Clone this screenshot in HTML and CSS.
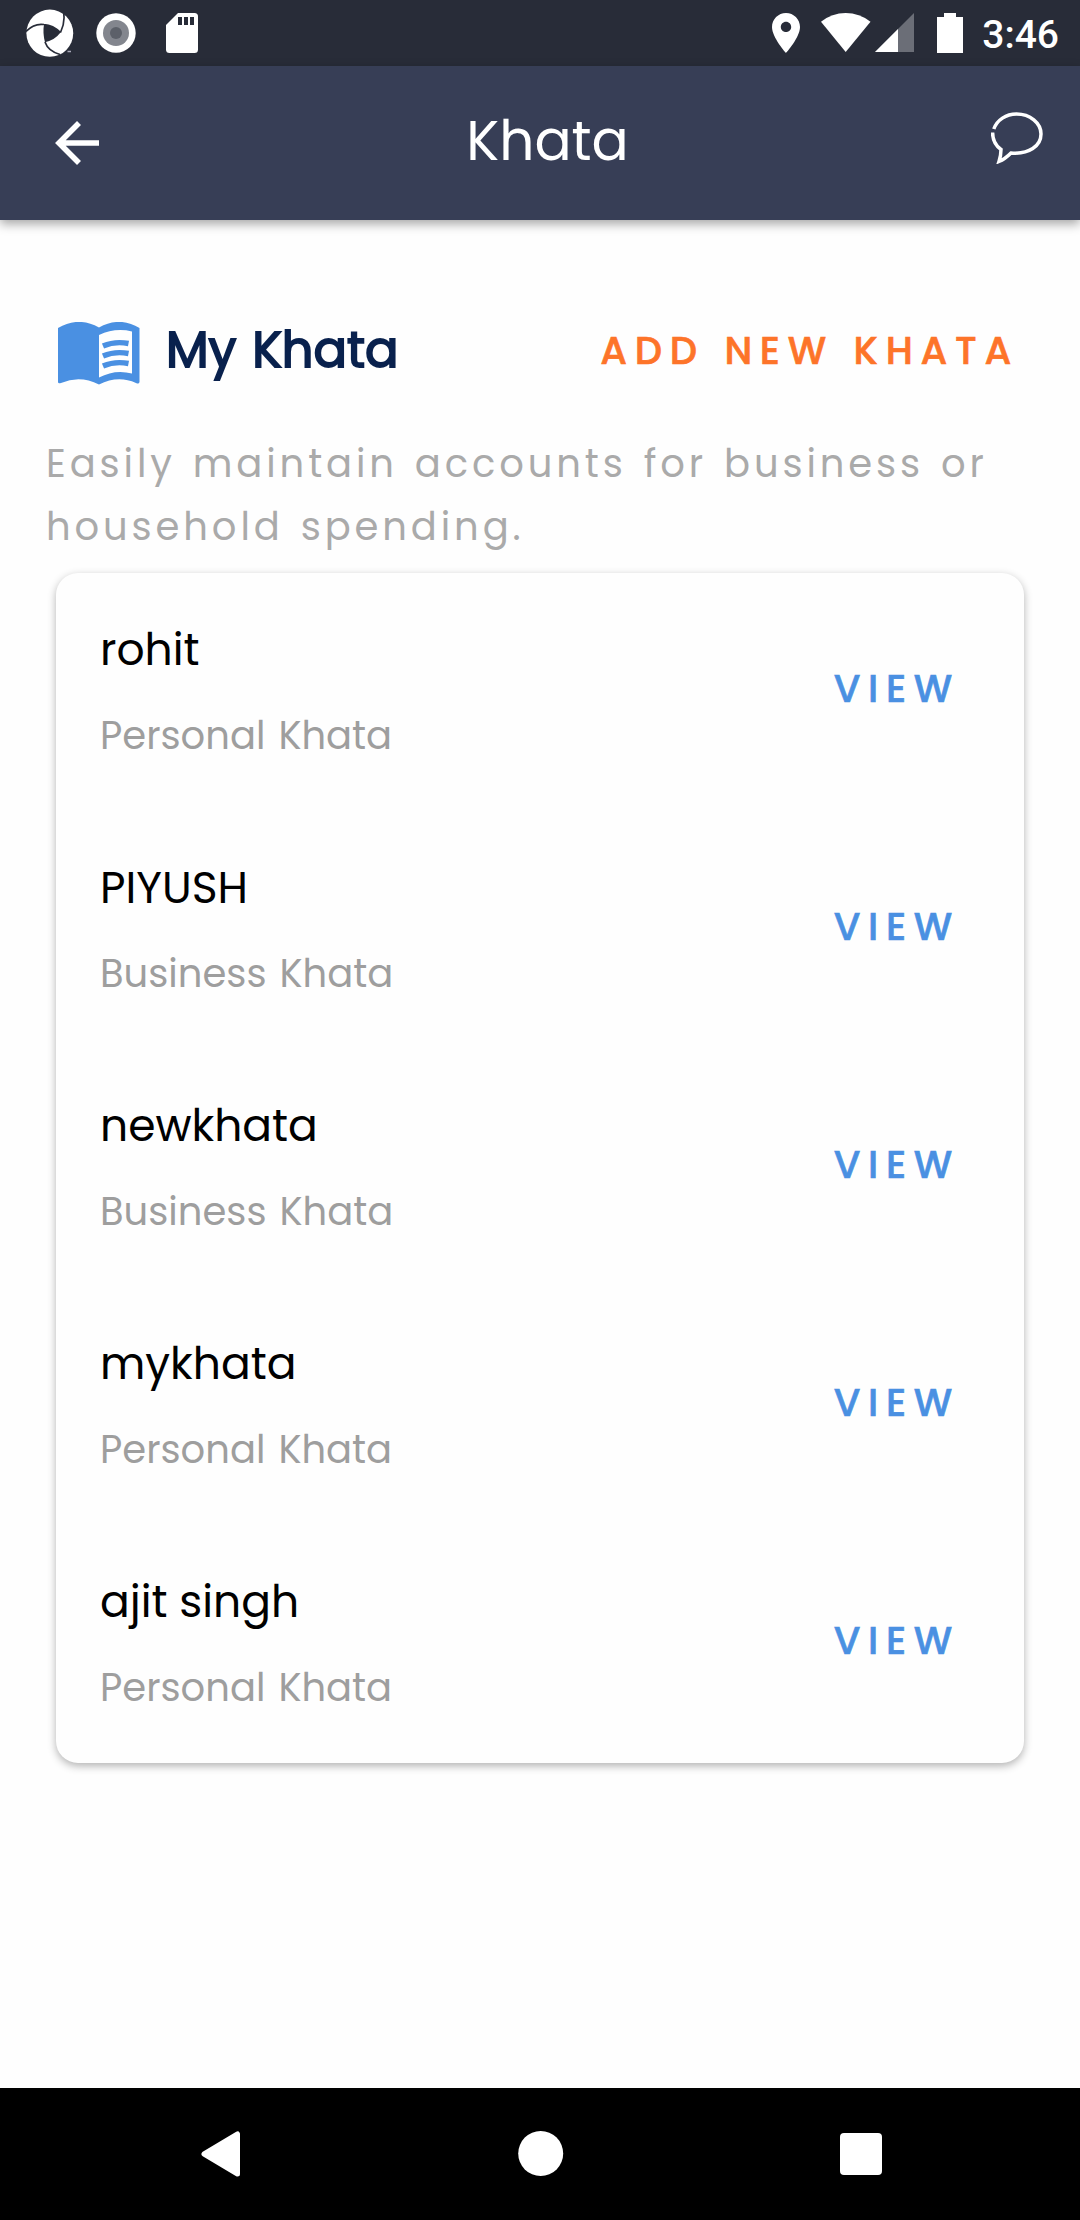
FILE: index.html
```html
<!DOCTYPE html>
<html lang="en">
<head>
<meta charset="utf-8">
<title>Khata</title>
<link rel="stylesheet" href="styles.css">
</head>
<body>
<div class="screen">
  <header class="status-bar">
    <div class="status-left">
      <svg class="icon-aperture" width="48" height="48" viewBox="26 9 48 48">
        <ellipse cx="49.8" cy="33.2" rx="23.4" ry="23.6" fill="#fff"/>
        <path d="M44 24.5Q53 25 60.5 32.5Q55 40 45 42.2Q42.5 33 44 24.5Z" fill="#282c38"/>
        <path d="M26 31.5Q34 23 44 24.5Q53 25 60.5 32.5M63 10Q66 21 60.5 32.5M45 42Q48 51 60 54.5" fill="none" stroke="#282c38" stroke-width="1.7"/>
        <path d="M67.5 51.5h3.5" stroke="#aab" stroke-width="1.5"/>
      </svg>
      <svg class="icon-record" width="40" height="40" viewBox="0 0 40 40">
        <circle cx="20" cy="20" r="19.7" fill="#fff"/>
        <circle cx="20" cy="20" r="13" fill="#83868e"/>
        <circle cx="20" cy="20" r="6" fill="#5c6069"/>
      </svg>
      <svg class="icon-sd" width="32" height="40" viewBox="0 0 32 40">
        <path d="M12 0H28.5Q32 0 32 3.5V36.5Q32 40 28.5 40H3.5Q0 40 0 36.5V12Z" fill="#fff"/>
        <path d="M12 4h4v8h-4zM18 4h4v8h-4zM24 4h4v8h-4z" fill="#282c38"/>
      </svg>
    </div>
    <div class="status-right">
      <svg class="icon-pin" width="28" height="40" viewBox="5 2 14 20" preserveAspectRatio="none">
        <path fill="#fff" d="M12 2C8.13 2 5 5.13 5 9c0 5.25 7 13 7 13s7-7.75 7-13c0-3.87-3.13-7-7-7zm0 9.5c-1.5 0-2.6-1.1-2.6-2.5s1.1-2.6 2.6-2.6 2.6 1.2 2.6 2.6-1.1 2.5-2.6 2.5z"/>
      </svg>
      <svg class="icon-wifi" width="50" height="40" viewBox="0 0 50 40">
        <path fill="#fff" d="M0 8.7Q11 0 24.7 0T49.5 8.7L24.7 39Z"/>
      </svg>
      <svg class="icon-signal" width="40" height="40" viewBox="0 0 40 40">
        <path fill="#6b6e77" d="M39 0V39H0Z"/>
        <path fill="#fff" d="M23 16V39H0Z"/>
      </svg>
      <svg class="icon-battery" width="26" height="40" viewBox="0 0 26 40">
        <path fill="#fff" d="M7 0H19V4H26V40H0V4H7Z"/>
      </svg>
      <span class="clock">3:46</span>
    </div>
  </header>

  <div class="app-bar">
    <svg class="icon-back" width="44" height="44" viewBox="0 0 44 44">
      <path d="M44 22H5M24 2L4 22L24 42" fill="none" stroke="#fff" stroke-width="5.6"/>
    </svg>
    <h1 class="title">Khata</h1>
    <svg class="icon-chat" width="52" height="52" viewBox="0 0 52 52">
      <path d="M2.8 17C6 8 15 2 25.5 2C39 2 50 11 50 22C50 34 38 42.5 20 41C17 44 13 47.5 8 49.5C9.5 45 10 41 10 37.5C5 34 1.6 28 1.6 20.5" fill="none" stroke="#fff" stroke-width="3.5"/>
    </svg>
  </div>

  <main class="content">
    <section class="heading">
      <svg class="icon-book" width="82" height="63" viewBox="0 0 82 63">
        <path fill="#4a90e2" d="M0 6Q20-6 41 5.5Q62-6 81.500 6V60Q81 62.5 78 61Q60 53 41 62.5Q22 53 3 61Q0 62 0 60Z"/>
        <path fill="#fefefe" d="M41 13Q57 5.5 74 9.5V51.5Q57 47 41 55.5Z"/>
        <path fill="none" stroke="#4a90e2" stroke-width="5.4" d="M45 24Q57 18.8 70.5 21.5M45 34Q57 28.8 70.5 31.5M45 44Q57 38.8 70.5 41.5"/>
      </svg>
      <h2 class="heading-text">My Khata</h2>
      <a class="add-link">ADD NEW KHATA</a>
    </section>
    <p class="description">Easily maintain accounts for business or household spending.</p>

    <section class="card">
      <div class="row">
        <div class="info"><div class="name">rohit</div><div class="kind">Personal Khata</div></div>
        <a class="view">VIEW</a>
      </div>
      <div class="row">
        <div class="info"><div class="name">PIYUSH</div><div class="kind">Business Khata</div></div>
        <a class="view">VIEW</a>
      </div>
      <div class="row">
        <div class="info"><div class="name">newkhata</div><div class="kind">Business Khata</div></div>
        <a class="view">VIEW</a>
      </div>
      <div class="row">
        <div class="info"><div class="name">mykhata</div><div class="kind">Personal Khata</div></div>
        <a class="view">VIEW</a>
      </div>
      <div class="row">
        <div class="info"><div class="name">ajit singh</div><div class="kind">Personal Khata</div></div>
        <a class="view">VIEW</a>
      </div>
    </section>
  </main>

  <nav class="nav-bar">
    <svg width="40" height="46" viewBox="0 0 40 46"><path d="M3 23L36.5 3V43Z" fill="#fff" stroke="#fff" stroke-width="5" stroke-linejoin="round"/></svg>
    <svg width="46" height="46" viewBox="0 0 46 46"><circle cx="22.7" cy="22.5" r="22.5" fill="#fff"/></svg>
    <svg width="42" height="42" viewBox="0 0 42 42"><rect width="42" height="42" rx="4" fill="#fff"/></svg>
  </nav>
</div>
</body>
</html>
```
FILE: styles.css
```css
* { box-sizing: border-box; }
body {
  margin: 0;
  background: #fefefe;
  font-family: Poppins, Inter, "Liberation Sans", sans-serif;
}
svg { display: block; flex: none; }
h1, h2, p { margin: 0; font-weight: 400; }
.screen { width: 1080px; height: 2220px; display: flex; flex-direction: column; }
.status-bar {
  height: 66px; flex: none;
  background: #282c38;
  display: flex; justify-content: space-between;
  padding: 0 21px 0 26px;
}
.status-left, .status-right { display: flex; align-items: center; }
.icon-record { margin-left: 22px; }
.icon-sd { margin-left: 30px; }
.icon-wifi { margin-left: 21px; }
.icon-signal { margin-left: 4px; }
.icon-battery { margin-left: 22px; }
.clock {
  margin-left: 19px;
  padding-top: 4px;
  color: #fff;
  font: 500 39px/62px Roboto, sans-serif;
}
.app-bar {
  height: 154px; flex: none;
  background: #373e56;
  box-shadow: 0 4px 10px rgba(0, 0, 0, .35);
  display: flex; align-items: center; justify-content: space-between;
  padding: 0 37px 0 55px;
}
.title { color: #fff; font-size: 55px; line-height: 64px; padding: 0 0 4px 5px; }
.icon-chat { margin-bottom: 11px; }
.content { flex: 1; padding: 98px 46px 0; }
.heading { display: flex; align-items: center; height: 70px; padding-left: 12px; }
.heading-text {
  margin-left: 26px;
  padding-bottom: 6px;
  color: #09214d;
  font-size: 49.5px;
  word-spacing: 2.5px;
  -webkit-text-stroke: 1.8px #09214d;
}
.add-link {
  margin-left: auto;
  margin-right: 15px;
  padding-bottom: 5px;
  color: #fd7429;
  font-size: 38.5px; font-weight: 500;
  letter-spacing: .2em;
  word-spacing: 2px;
  -webkit-text-stroke: .6px #fd7429;
}
.description {
  margin-top: 44.8px;
  color: #aaa;
  font-size: 38.5px; line-height: 62.7px;
  letter-spacing: 3.89px;
  word-spacing: 2.8px;
}
.card {
  margin: 14.8px 10px 0;
  background: #fefefe;
  border-radius: 22px;
  box-shadow: 0 3px 8px rgba(0, 0, 0, .3);
}
.row { height: 238px; display: flex; padding: 46.6px 64px 0 44px; justify-content: space-between; }
.name { color: #000; font-size: 44px; line-height: 60px; }
.kind { color: #9e9e9e; font-size: 38.5px; line-height: 50px; margin-top: 31px; word-spacing: 2.7px; }
.view {
  color: #4a90e2;
  font-size: 38.5px; font-weight: 500; line-height: 137px;
  letter-spacing: .2em;
  -webkit-text-stroke: .6px #4a90e2;
}
.nav-bar {
  height: 132px; flex: none;
  background: #000;
  display: flex; align-items: center; justify-content: space-between;
  padding: 0 198px 0 201px;
}
```
